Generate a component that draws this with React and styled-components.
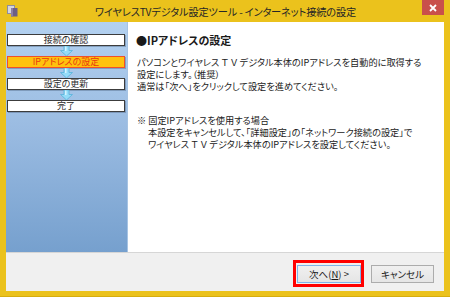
import React from 'react';
import styled, { createGlobalStyle } from 'styled-components';

const GlobalStyle = createGlobalStyle`
  html, body {
    margin: 0;
    padding: 0;
    width: 450px;
    height: 297px;
    overflow: hidden;
  }
  body {
    font-family: 'Noto Sans CJK JP', 'Noto Sans', sans-serif;
    font-feature-settings: 'palt';
    color: #1a1a1a;
  }
`;

const Window = styled.div`
  width: 450px;
  height: 297px;
  box-sizing: border-box;
  background: #ebc21c;
  border-bottom: 1px solid #d7ad0e;
  display: flex;
  flex-direction: column;
`;

const TitleBar = styled.div`
  height: 22px;
  padding: 0 6px 0 7px;
  display: grid;
  grid-template-columns: 1fr auto 1fr;
  align-items: center;
`;

const TitleText = styled.div`
  font-size: 10.2px;
  letter-spacing: -0.15px;
  color: #262626;
  white-space: nowrap;
  padding-top: 1px;
`;

const CloseButton = styled.div`
  justify-self: end;
  align-self: start;
  width: 22px;
  height: 15px;
  background: #c9504b;
  display: flex;
  align-items: center;
  justify-content: center;
`;

const Body = styled.div`
  flex: 1;
  margin: 0 6px 5px 6px;
  background: #fff;
  display: flex;
  flex-direction: column;
  min-height: 0;
`;

const Main = styled.div`
  flex: 1;
  display: flex;
`;

const Sidebar = styled.div`
  width: 122px;
  box-sizing: border-box;
  padding: 12px 2px 0 1px;
  background: linear-gradient(to bottom, #b3d1f0 0%, #9bbce2 45%, #76a0ce 100%);
  border-right: 1px solid #a6c3e3;
  display: flex;
  flex-direction: column;
  align-items: stretch;
`;

const StepBox = styled.div`
  height: 12px;
  box-sizing: border-box;
  border: 1px solid ${p => (p.$active ? '#f0502a' : '#3c3c3c')};
  background: ${p => (p.$active ? '#ffc20e' : '#fff')};
  color: ${p => (p.$active ? '#e8390e' : '#2a2a2a')};
  box-shadow: 1px 1px 0 rgba(60, 80, 110, 0.35);
  font-size: 9px;
  line-height: 10px;
  text-align: center;
  white-space: nowrap;
`;

const ArrowWrap = styled.div`
  height: 10px;
  display: flex;
  justify-content: center;
  & > svg {
    display: block;
    flex: none;
  }
`;

const Content = styled.div`
  flex: 1;
  padding: 11px 8px 0 9px;
`;

const Heading = styled.div`
  font-size: 11px;
  font-weight: bold;
  line-height: 14px;
  margin-left: -1px;
  color: #1a1a1a;
`;

const Paragraph = styled.div`
  font-size: 9.2px;
  line-height: 12px;
  margin-top: ${p => p.$top || 0}px;
  padding-left: ${p => p.$indent || 0}px;
  white-space: nowrap;
  color: #222;
`;

const Wide = styled.span`
  font-feature-settings: normal;
  margin: 0 1px;
`;

const Footer = styled.div`
  height: 39px;
  box-sizing: border-box;
  border-top: 1px solid #d6d6d6;
  background: #f0f0f0;
  display: flex;
  justify-content: flex-end;
  align-items: flex-start;
  gap: 10px;
  padding: 12px 10px 0 0;
`;

const Button = styled.div`
  position: relative;
  width: ${p => p.$w}px;
  height: 18px;
  box-sizing: border-box;
  border: 1px solid ${p => (p.$focused ? '#7eb4ea' : '#acacac')};
  background: linear-gradient(to bottom, #f0f0f0, #e5e5e5);
  font-size: 9.5px;
  line-height: 16px;
  text-align: center;
  color: #1a1a1a;
  white-space: nowrap;
`;

const Highlight = styled.div`
  position: absolute;
  top: -6px;
  bottom: -5px;
  left: -5px;
  right: -4px;
  border: 3px solid #f00;
`;

const Mnemonic = styled.span`
  text-decoration: underline;
`;

function AppIcon() {
  return (
    <svg width="11" height="12" viewBox="0 0 11 12">
      <rect x="0.5" y="0.5" width="7" height="8" fill="#d6d6de" stroke="#8e8e9e" />
      <rect x="4" y="3" width="6.5" height="8.5" fill="#6c5f86" />
      <rect x="4" y="3" width="2" height="8.5" fill="#8c80a6" />
    </svg>
  );
}

function CloseIcon() {
  return (
    <svg width="8" height="8" viewBox="0 0 8 8">
      <path d="M1 1 L7 7 M7 1 L1 7" stroke="#fff" strokeWidth="1.8" />
    </svg>
  );
}

function DownArrow() {
  return (
    <svg width="13" height="10" viewBox="0 0 13 10">
      <path d="M4 0 H9 V4.5 H12.5 L6.5 10 L0.5 4.5 H4 Z" fill="#95dcf8" stroke="#5fb4dc" strokeWidth="0.9" />
      <path d="M5 0.5 H6.5 V5 H5 Z" fill="#d4f3ff" />
    </svg>
  );
}

const steps = ['接続の確認', 'IPアドレスの設定', '設定の更新', '完了'];

export default function App() {
  return (
    <>
      <GlobalStyle />
      <Window>
        <TitleBar>
          <AppIcon />
          <TitleText>ワイヤレスTVデジタル設定ツール - インターネット接続の設定</TitleText>
          <CloseButton><CloseIcon /></CloseButton>
        </TitleBar>
        <Body>
          <Main>
            <Sidebar>
              {steps.map((s, i) => (
                <React.Fragment key={s}>
                  {i > 0 && <ArrowWrap><DownArrow /></ArrowWrap>}
                  <StepBox $active={i === 1}>{s}</StepBox>
                </React.Fragment>
              ))}
            </Sidebar>
            <Content>
              <Heading>●IPアドレスの設定</Heading>
              <Paragraph $top={9}>
                パソコンとワイヤレス<Wide>ＴＶ</Wide>デジタル本体のIPアドレスを自動的に取得する<br />
                設定にします。（推奨）<br />
                通常は「次へ」をクリックして設定を進めてください。
              </Paragraph>
              <Paragraph $top={22}>※ 固定IPアドレスを使用する場合</Paragraph>
              <Paragraph $indent={11}>
                本設定をキャンセルして、「詳細設定」の「ネットワーク接続の設定」で<br />
                ワイヤレス<Wide>ＴＶ</Wide>デジタル本体のIPアドレスを設定してください。
              </Paragraph>
            </Content>
          </Main>
          <Footer>
            <Button $w={64} $focused>
              次へ(<Mnemonic>N</Mnemonic>) &gt;
              <Highlight />
            </Button>
            <Button $w={63}>キャンセル</Button>
          </Footer>
        </Body>
      </Window>
    </>
  );
}
